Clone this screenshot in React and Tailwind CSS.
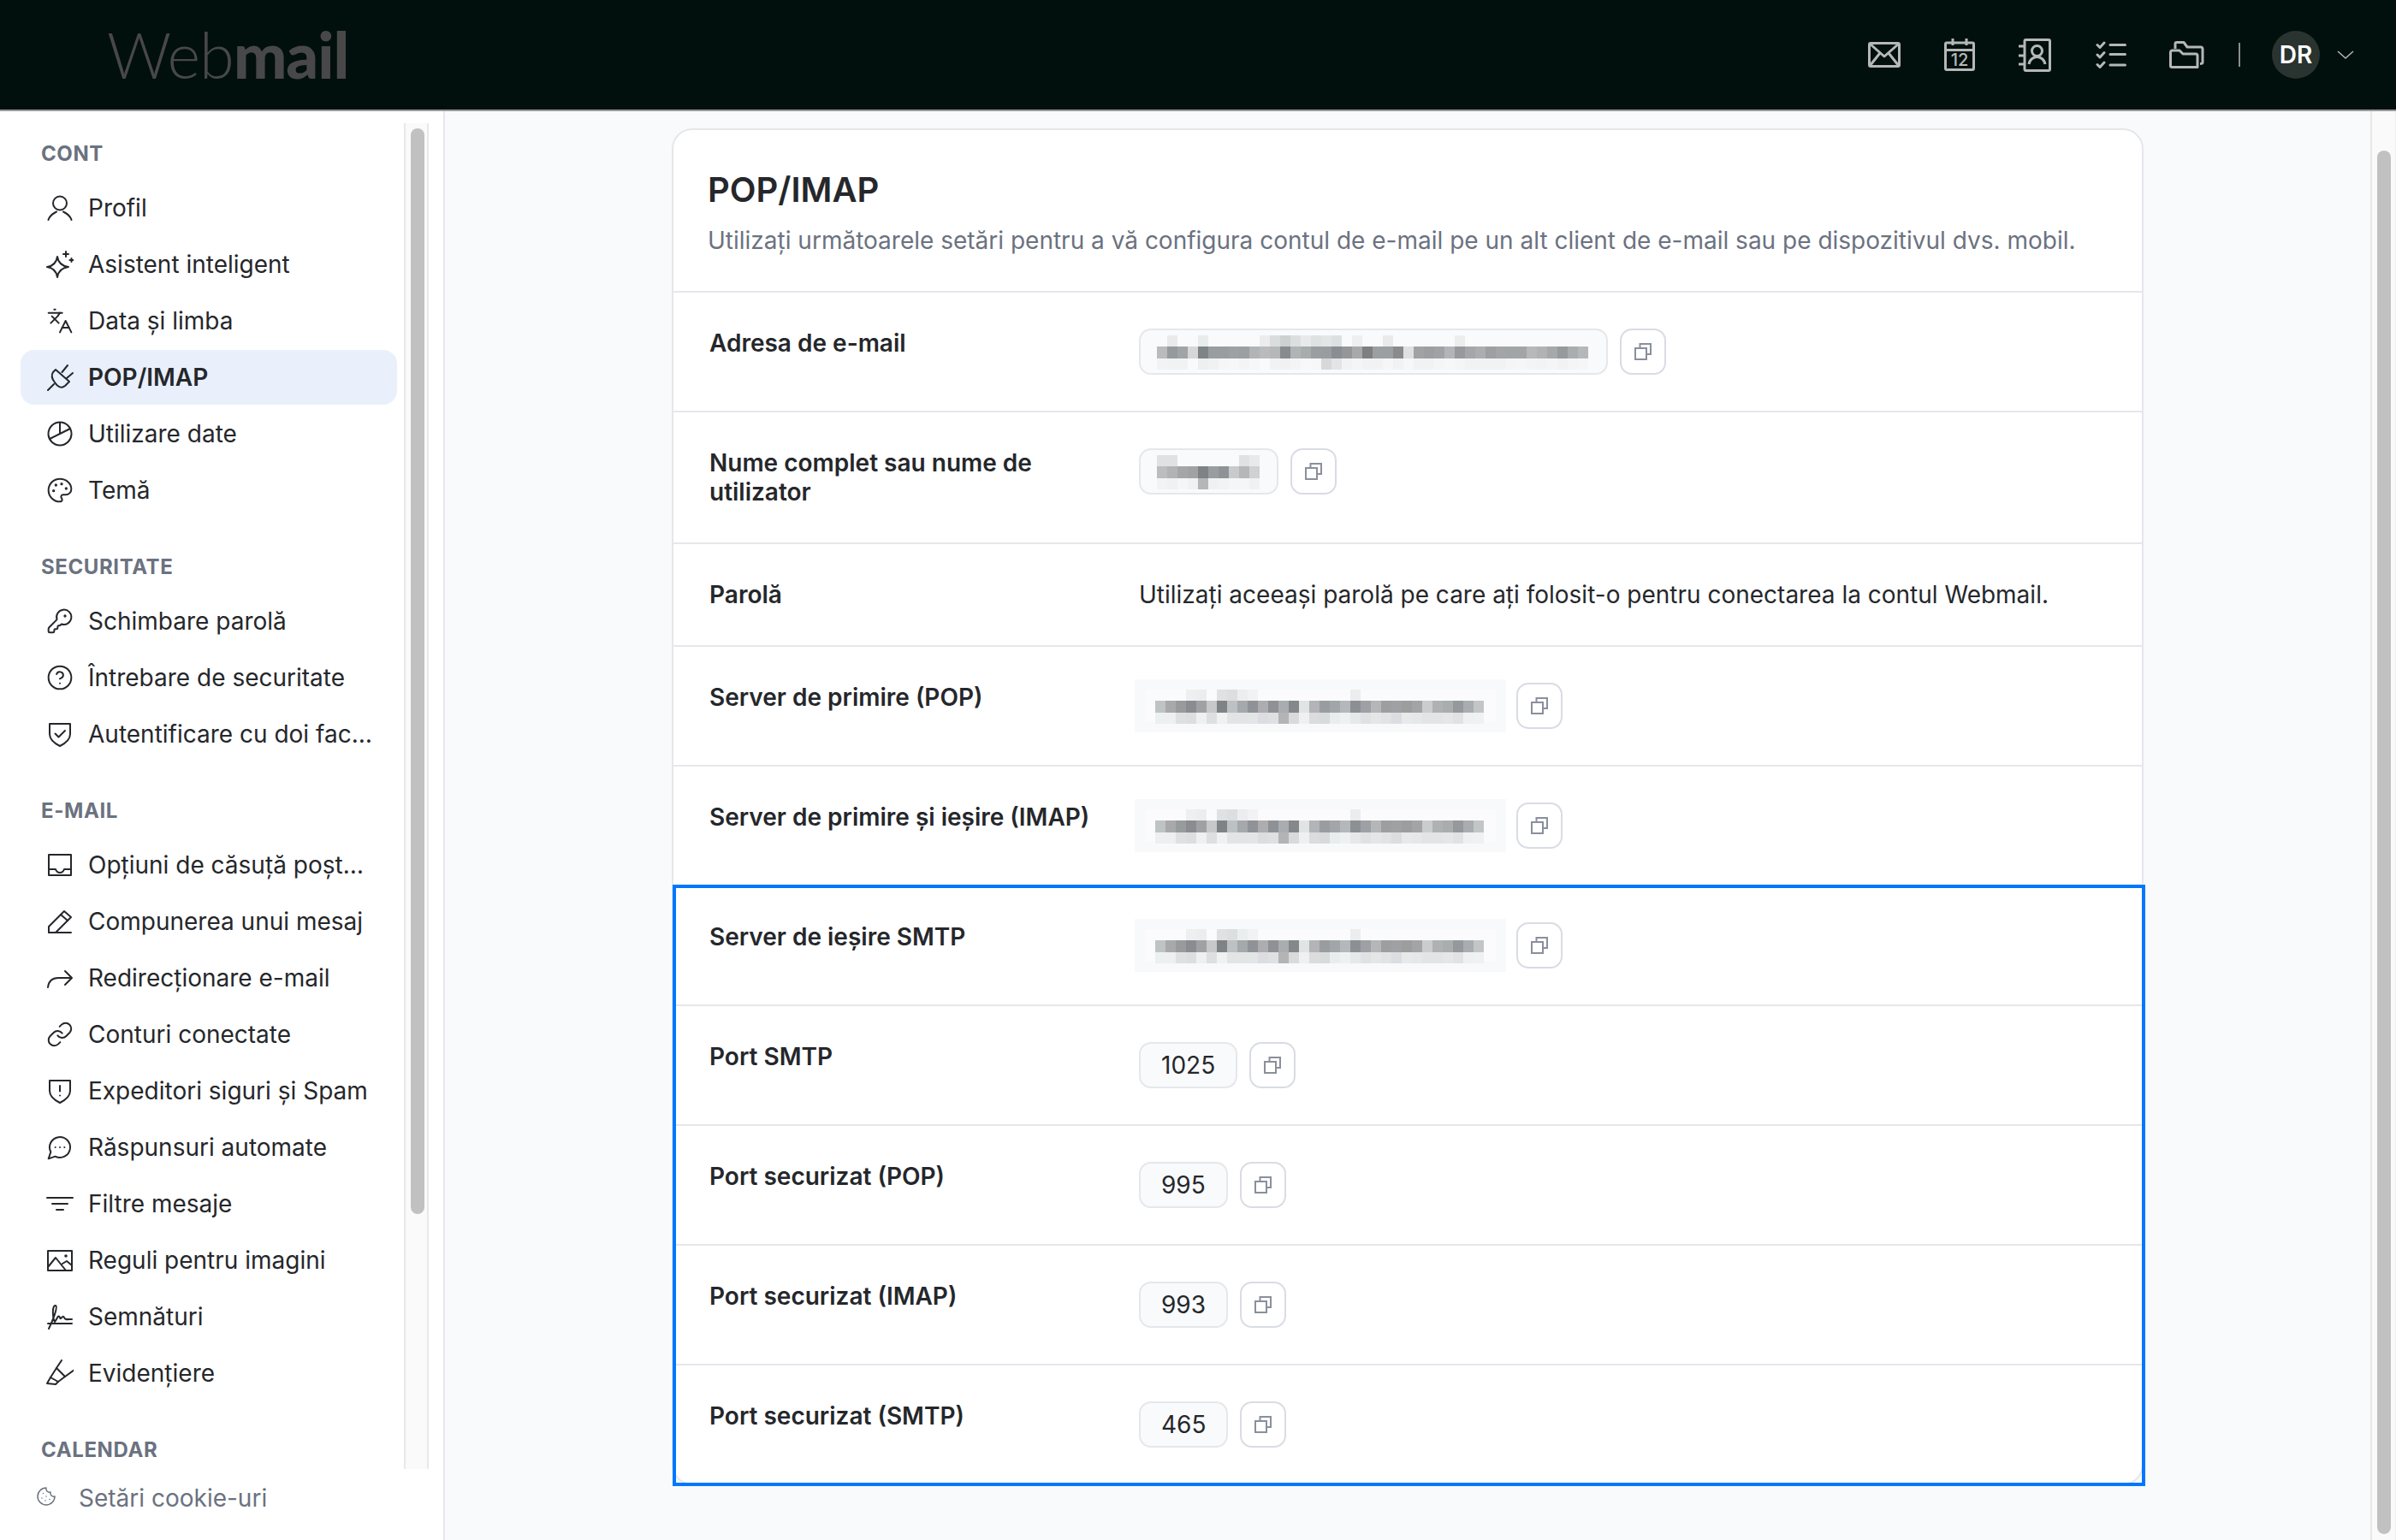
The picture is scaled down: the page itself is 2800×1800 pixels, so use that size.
import React from "react";

const Ic = ({ children, size = 32, sw = 1.5, vb = "0 0 24 24", className = "" }) => (
  <svg width={size} height={size} viewBox={vb} fill="none" stroke="currentColor" strokeWidth={sw} strokeLinecap="round" strokeLinejoin="round" className={"shrink-0 " + className}>
    {children}
  </svg>
);
const I32 = ({ children }) => <Ic vb="0 0 32 32" sw={2}>{children}</Ic>;

const icons = {
  user: <I32><circle cx="16" cy="10.5" r="8" /><path d="M2.5 30C4 25 8 22.5 12 20.5M29.5 30C28 25 24 22.5 20 20.5" /></I32>,
  sparkle: <I32><path d="M13 7C14 14 18 18 26 19C18 20 14 24 13 31C12 24 8 20 1 19C8 18 12 14 13 7Z" /><path d="M23 1V7M20 4H26M29.5 9V13M27.5 11H31.5" /></I32>,
  lang: <Ic><path d="m5 8 6 6" /><path d="m4 14 6-6 2-3" /><path d="M2 5h12" /><path d="M7 2h1" /><path d="m22 22-5-10-5 10" /><path d="M14 18h6" /></Ic>,
  plug: <I32><path d="M11 7L27 21L22 26C18 29 14 28 10 22C6 17 6 13 8 10Z" /><path d="M9 24L2 31M25 2L18.500 10M31 11L24 17" /></I32>,
  pie: <I32><circle cx="16" cy="16" r="13.500" /><path d="M16 3V16L28 10M16 16L4 22" /></I32>,
  palette: <Ic><path d="M12 22a1 1 0 0 1 0-20 10 9 0 0 1 10 9 5 5 0 0 1-5 5h-2.250a1.750 1.750 0 0 0-1.400 2.800l.3.4a1.750 1.750 0 0 1-1.400 2.800z" /><circle cx="13.500" cy="6.500" r=".5" fill="currentColor" /><circle cx="17.500" cy="10.500" r=".5" fill="currentColor" /><circle cx="6.500" cy="12.500" r=".5" fill="currentColor" /><circle cx="8.500" cy="7.500" r=".5" fill="currentColor" /></Ic>,
  key: <Ic><path d="M2.586 17.414A2 2 0 0 0 2 18.828V21a1 1 0 0 0 1 1h3a1 1 0 0 0 1-1v-1a1 1 0 0 1 1-1h1a1 1 0 0 0 1-1v-1a1 1 0 0 1 1-1h.172a2 2 0 0 0 1.414-.586l.814-.814a6.500 6.500 0 1 0-4-4z" /><circle cx="16.500" cy="7.500" r=".5" fill="currentColor" /></Ic>,
  help: <Ic><circle cx="12" cy="12" r="10" /><path d="M9.090 9a3 3 0 0 1 5.830 1c0 2-3 3-3 3" /><path d="M12 17h.01" /></Ic>,
  shieldCheck: <I32><path d="M4 4H28V16C28 23 22 27 16 30C10 27 4 23 4 16Z" /><path d="M10.500 15.500L14.500 19.500L22 12" /></I32>,
  inbox: <I32><path d="M3 4H29V28H3Z" /><path d="M3 21H11C12 24 14 25 16 25C18 25 20 24 21 21H29" /></I32>,
  pencil: <I32><path d="M3 29V22L21 4L29 11L11 29Z" /><path d="M17 8L25 15M3 29H29" /></I32>,
  forward: <I32><path d="M2 27C3 19 8 16 14 16H30M22 8L30 16L22 24" /></I32>,
  link: <Ic><path d="M10 13a5 5 0 0 0 7.540.54l3-3a5 5 0 0 0-7.070-7.070l-1.720 1.710" /><path d="M14 11a5 5 0 0 0-7.540-.54l-3 3a5 5 0 0 0 7.070 7.070l1.710-1.710" /></Ic>,
  shieldAlert: <I32><path d="M4 4H28V16C28 23 22 27 16 30C10 27 4 23 4 16Z" /><path d="M16 10V16.500M16 21.500V21.600" /></I32>,
  message: <Ic><path d="M7.900 20A9 9 0 1 0 4 16.100L2 22Z" /><path d="M8 12h.01" /><path d="M12 12h.01" /><path d="M16 12h.01" /></Ic>,
  filter: <I32><path d="M1 9H31M7 16H25M12 23H20" /></I32>,
  image: <I32><path d="M2 5H30V28H2Z" /><path d="M2 24L11 13L23 28M19 20L24 17L30 22" /><circle cx="23" cy="11" r=".8" fill="currentColor" /></I32>,
  signature: <I32><path d="M3 30C8 20 14 4 11 3C7 2 7 16 10 22C13 18 14 13 16 17C17 21 19 13 21 17C22 20 25 19 30 19" /><path d="M2 24H30" /></I32>,
  highlight: <I32><path d="M18 1L12 10L22 20L33 12" /><path d="M12 10L5 21L14 26L22 20" /><path d="M5 21L1 28L11 29L14 26" /></I32>,
};

const sections = [
  { title: "Cont", items: [["user", "Profil"], ["sparkle", "Asistent inteligent"], ["lang", "Data și limba"], ["plug", "POP/IMAP", true], ["pie", "Utilizare date"], ["palette", "Temă"]] },
  { title: "Securitate", items: [["key", "Schimbare parolă"], ["help", "Întrebare de securitate"], ["shieldCheck", "Autentificare cu doi factori"]] },
  { title: "E-mail", items: [["inbox", "Opțiuni de căsuță poștală"], ["pencil", "Compunerea unui mesaj"], ["forward", "Redirecționare e-mail"], ["link", "Conturi conectate"], ["shieldAlert", "Expeditori siguri și Spam"], ["message", "Răspunsuri automate"], ["filter", "Filtre mesaje"], ["image", "Reguli pentru imagini"], ["signature", "Semnături"], ["highlight", "Evidențiere"]] },
  { title: "Calendar", items: [] },
];

const Mosaic = ({ top, mid, bottom, className = "" }) => (
  <svg width={mid.length * 12} height={40} shapeRendering="crispEdges" className={"shrink-0 " + className}>
    {Object.entries(top).map(([i, c]) => <rect key={"t" + i} x={i * 12} y={0} width={12} height={13} fill={c} />)}
    {mid.map((c, i) => <rect key={"m" + i} x={i * 12} y={13} width={12} height={14} fill={c} />)}
    {bottom.map((c, i) => <rect key={"b" + i} x={i * 12} y={27} width={12} height={13} fill={c} />)}
  </svg>
);

const emailM = {
  top: { 1: "#e9eaeb", 4: "#e8ecec", 10: "#ececed", 11: "#dadddd", 12: "#ced1d2", 13: "#dcdfdf", 14: "#e8e9ea", 15: "#dfe2e3", 16: "#e3e5e6", 17: "#dde0e1", 19: "#eeeff0", 22: "#e9eaeb", 29: "#eceded" },
  mid: ["#b8bcbb", "#959a9d", "#a0a4a6", "#d5d7d8", "#7e8386", "#999da0", "#999da0", "#9da1a3", "#9b9fa2", "#b0b4b7", "#b9bbbd", "#b4b8b7", "#878b8e", "#afb4b7", "#a8acad", "#9a9ea1", "#999d9f", "#8a8e92", "#93979a", "#a8a9aa", "#7c8083", "#9b9fa2", "#9b9fa2", "#878b8e", "#dfe0e1", "#a0a3a6", "#9c9fa1", "#a1a2a6", "#b2b5b8", "#98989d", "#a4a7aa", "#abaeb0", "#9e9ea3", "#a3a6a9", "#a2a5a8", "#a2a5a8", "#b6b9b8", "#b2b2b5", "#a5a9ab", "#969a9d", "#a9adaf", "#b5b8ba"],
  bottom: ["#f2f3f4", "#f1f2f3", "#f1f2f3", "#f9fafb", "#eeeff1", "#f0f1f3", "#f5f6f7", "#f6f7f8", "#f3f4f5", "#f6f7f8", "#f9fafb", "#f1f2f4", "#f0f1f3", "#f3f4f6", "#f7f8f9", "#f6f8f8", "#d6d8da", "#e2e4e6", "#f1f2f3", "#f4f5f6", "#f1f2f4", "#f1f2f4", "#f5f6f7", "#f1f2f4", "#f6f7f8", "#f0f2f3", "#f0f2f3", "#f4f5f6", "#f6f7f8", "#f4f5f6", "#f1f2f4", "#f1f2f4", "#f0f2f3", "#f0f2f3", "#f4f5f6", "#f5f6f7", "#f3f4f5", "#f2f3f4", "#f4f5f6", "#f1f2f4", "#f4f5f6", "#f5f6f7"],
};
const nameM = {
  top: { 0: "#dfe1e3", 1: "#dfe1e3", 8: "#dfe1e3", 9: "#e7e9ea" },
  mid: ["#bbbdbf", "#b1b3b5", "#a4a6a8", "#a0a2a4", "#7f8285", "#9a9da0", "#8f9397", "#c8cbcc", "#b5b7b9", "#cfd1d2"],
  bottom: ["#f2f3f4", "#f0f1f3", "#f5f6f7", "#f0f1f3", "#b4b6b8", "#f0f1f3", "#f2f3f4", "#f5f6f7", "#f5f6f7", "#f0f1f3"],
};
const serverM = {
  top: { 3: "#eeeff0", 4: "#ecedee", 6: "#e0e1e3", 7: "#dcdfdf", 8: "#ecedef", 9: "#f2f2f4", 19: "#ecedef" },
  mid: ["#bfc3c6", "#a8a9ab", "#979b9e", "#898d91", "#a0a1a5", "#c6c8c9", "#7f8386", "#bcc1c4", "#a5a9ac", "#8f9397", "#adadaf", "#8e9195", "#a9adb0", "#84888b", "#e1e4e4", "#b2b4b7", "#9a9da0", "#a3a6a9", "#b4b8bb", "#8c9095", "#9da1a5", "#b5b6b8", "#9d9ea2", "#a0a1a4", "#9c9d9f", "#a3a4a7", "#cbcccd", "#afb2b5", "#a9adad", "#95989c", "#aaadb0", "#c2c6c7"],
  bottom: ["#ecf0f1", "#ecf0f1", "#dfe0e2", "#dddee0", "#eff0f2", "#dde0e1", "#f0f1f3", "#e3e4e6", "#e3e4e6", "#e4e5e7", "#dcdde0", "#dee0e1", "#b3b4b6", "#d9dadc", "#eff0f1", "#dadcdd", "#d8dbdc", "#e9edee", "#eef1f2", "#e6e8ea", "#e0e1e3", "#e5e6e8", "#e1e3e5", "#dcdde0", "#e8e9eb", "#e5e8e9", "#e3e4e6", "#e2e4e6", "#e5e6e8", "#e1e2e4", "#eff0f2", "#eff1f2"],
};

const CopyBtn = () => (
  <button className="w-[54px] h-[54px] shrink-0 flex items-center justify-center rounded-[14px] border-2 border-[#d9dce3] bg-white text-[#8a8f9c]">
    <svg width="20" height="20" viewBox="0 0 20 20" fill="none" stroke="currentColor" strokeWidth="2">
      <path d="M6.500 6V1H19V13H14" />
      <rect x="1" y="6" width="13" height="13" />
    </svg>
  </button>
);

const Box = ({ children, className = "" }) => (
  <div className={"h-[54px] rounded-[14px] border-2 border-[#e5e7eb] bg-[#f9fafb] flex items-center leading-[50px] " + className}>{children}</div>
);

const Copyable = ({ children, gap = "gap-[14px]" }) => <div className={"flex items-start " + gap}>{children}<CopyBtn /></div>;

const MaskBox = ({ m, w }) => (
  <Copyable>
    <Box className={"items-start pl-[19px] pt-[6px] " + w}><Mosaic {...m} /></Box>
  </Copyable>
);

const ServerValue = () => (
  <div className="flex items-start gap-[12px]">
    <div className="-ml-[5px] -my-[4px] w-[434px] h-[62px] shrink-0 bg-[#f8f9fb] p-[12px] pb-[12px]">
      <div className="h-[38px] bg-[#fbfbfd] pl-[12px]"><Mosaic {...serverM} /></div>
    </div>
    <CopyBtn />
  </div>
);

const Port = ({ v }) => <Copyable><Box className="px-[24px]">{v}</Box></Copyable>;

const Row = ({ label, children, last }) => (
  <div className={"flex items-start px-[42px] py-[42px] " + (last ? "" : "border-b-2 border-[#e5e7eb]")}>
    <div className="w-[502px] shrink-0 pr-[32px] font-semibold leading-[34px]">{label}</div>
    <div className="flex-1 leading-[34px]">{children}</div>
  </div>
);

export default function App() {
  return (
    <div className="w-[2800px] h-[1800px] flex flex-col overflow-hidden bg-[#f9fafb] text-[28px] text-[#25272b] font-['Inter',sans-serif]">
      <header className="h-[130px] shrink-0 flex items-center border-b-2 border-[#999999] bg-[#010f0d]">
        <div className="pl-[125px] flex-1 text-[74px] leading-[128px] text-[#484848] font-['Lato',sans-serif] font-light tracking-[-1px]">
          Web<span className="font-black">mail</span>
        </div>
        <div className="flex items-center text-[#b4b8b6]">
          <div className="w-[88px] flex justify-center">
            <svg width="38" height="30" viewBox="0 0 38 30" fill="none" stroke="currentColor" strokeWidth="3" strokeLinejoin="round">
              <rect x="1.500" y="1.500" width="35" height="27" rx="1.500" />
              <path d="M2 2L19 17L36 2M2 28L14 13M36 28L24 13" />
            </svg>
          </div>
          <div className="w-[88px] flex justify-center">
            <svg width="36" height="38" viewBox="0 0 36 38" fill="none" stroke="currentColor" strokeWidth="3" strokeLinejoin="round">
              <rect x="1.500" y="5" width="33" height="31.500" rx="1.500" />
              <path d="M2 13.500H34M10 0V8M26 0V8" />
              <text x="18" y="32" textAnchor="middle" fontSize="20" fontFamily="Inter" fontWeight="500" fill="currentColor" stroke="none">12</text>
            </svg>
          </div>
          <div className="w-[88px] flex justify-center">
            <svg width="38" height="39" viewBox="0 0 38 39" fill="none" stroke="currentColor" strokeWidth="3" strokeLinejoin="round">
              <rect x="7" y="1.500" width="29.500" height="36" rx="1.500" />
              <path d="M0 9H7M0 20H7M0 30H7" />
              <circle cx="21.500" cy="14.500" r="6" />
              <path d="M12 30C13 24 18 21.500 21.500 21.500C25 21.500 30 24 31 30" />
            </svg>
          </div>
          <div className="w-[89px] flex justify-center">
            <svg width="36" height="32" viewBox="0 0 36 32" fill="none" stroke="currentColor" strokeWidth="3" strokeLinecap="round" strokeLinejoin="round">
              <path d="M2 4.500L5 7.500L10 2M2 16L5 19L10 13.500M2 27.500L5 30.500L10 25" />
              <path d="M17 4.500H34.500M17 15.500H34.500M17 28H34.500" />
            </svg>
          </div>
          <div className="w-[88px] flex justify-center">
            <svg width="41" height="32" viewBox="0 0 41 32" fill="none" stroke="currentColor" strokeWidth="3" strokeLinejoin="round">
              <path d="M7 9V3C7 2 8 1.500 9 1.500H17L21 7H37C38 7 39 8 39 9V25C39 26 38 26.500 36 26.500" />
              <path d="M1.500 13C1.500 12 2.500 11 3.500 11H12L16 15H31C32.500 15 33 16 33 17V30.500H3C2 30.500 1.500 30 1.500 29Z" />
            </svg>
          </div>
          <div className="w-[2px] h-[28px] bg-[#8a8e8c] ml-[17px] mr-[37px]" />
          <div className="w-[56px] h-[56px] rounded-full bg-[#29332f] flex items-center justify-center text-white text-[28px] font-semibold">DR</div>
          <svg className="ml-[20px] mr-[49px]" width="20" height="10" viewBox="0 0 20 10" fill="none" stroke="currentColor" strokeWidth="1.500">
            <path d="M1 1L10 9L19 1" />
          </svg>
        </div>
      </header>

      <div className="flex-1 flex min-h-0">
        <aside className="w-[520px] shrink-0 bg-white border-r-2 border-[#e5e7eb] flex flex-col">
          <div className="mt-[14px] h-[1573px] shrink-0 flex overflow-hidden">
            <nav className="w-[472px] shrink-0 pl-[24px] pt-[18px] overflow-hidden">
              {sections.map((s) => (
                <div key={s.title} className="mb-[40px]">
                  <div className="pl-[24px] h-[36px] mb-[13px] flex items-center text-[24px] font-bold uppercase text-[#6b7280] tracking-[0.6px]">{s.title}</div>
                  <div className="flex flex-col gap-[2px]">
                    {s.items.map(([ic, label, active]) => (
                      <div key={label} className={"h-[64px] w-[440px] rounded-[16px] flex items-center pl-[30px] pr-[26px] gap-[17px] " + (active ? "bg-[#e9f0fb] font-semibold" : "")}>
                        {icons[ic]}
                        <span className="truncate">{label}</span>
                      </div>
                    ))}
                  </div>
                </div>
              ))}
            </nav>
            <div className="w-[29px] shrink-0 bg-[#fafafa] border-x-2 border-[#e8e8e8]">
              <div className="ml-[6px] mt-[6px] w-[16px] h-[1269px] rounded-full bg-[#c1c1c1]" />
            </div>
          </div>
          <div className="flex items-start pl-[42px] text-[#6b7280]">
            <div className="mt-[20px] w-[24px] h-[24px]">
              <Ic size={24} sw={1.5}>
                <path d="M12 2a10 10 0 1 0 10 10 4 4 0 0 1-5-5 4 4 0 0 1-5-5" /><path d="M8.500 8.500v.01" /><path d="M16 15.500v.01" /><path d="M12 12v.01" /><path d="M11 17v.01" /><path d="M7 14v.01" />
              </Ic>
            </div>
            <span className="ml-[26px] mt-[14px] leading-[40px]">Setări cookie-uri</span>
          </div>
        </aside>

        <main className="flex-1 flex min-w-0">
          <div className="flex-1 min-w-0 pt-[20px]">
            <div className="w-[1720px] mx-auto rounded-[24px] border-2 border-[#e5e7eb] bg-white">
              <div className="h-[190px] px-[40px] border-b-2 border-[#e5e7eb] pt-[44px]">
                <h1 className="text-[40px] leading-[52px] font-semibold">POP/IMAP</h1>
                <p className="mt-[14px] leading-[38px] text-[#6b7280]">Utilizați următoarele setări pentru a vă configura contul de e-mail pe un alt client de e-mail sau pe dispozitivul dvs. mobil.</p>
              </div>
              <Row label="Adresa de e-mail"><MaskBox m={emailM} w="w-[548px]" /></Row>
              <Row label="Nume complet sau nume de utilizator"><MaskBox m={nameM} w="w-[163px]" /></Row>
              <Row label="Parolă">Utilizați aceeași parolă pe care ați folosit-o pentru conectarea la contul Webmail.</Row>
              <Row label="Server de primire (POP)"><ServerValue /></Row>
              <Row label="Server de primire și ieșire (IMAP)"><ServerValue /></Row>
              <div className="relative">
                <div className="absolute -top-[2px] -left-[1px] -right-[4px] -bottom-[3px] border-4 border-[#0077ff] pointer-events-none z-10" />
                <Row label="Server de ieșire SMTP"><ServerValue /></Row>
                <Row label="Port SMTP"><Port v="1025" /></Row>
                <Row label="Port securizat (POP)"><Port v="995" /></Row>
                <Row label="Port securizat (IMAP)"><Port v="993" /></Row>
                <Row label="Port securizat (SMTP)" last><Port v="465" /></Row>
              </div>
            </div>
          </div>
          <div className="w-[30px] shrink-0 bg-[#fafafa] border-l-2 border-[#e8e8e8] border-r border-r-[#eeeeee]">
            <div className="ml-[6px] mt-[46px] w-[16px] h-[1617px] rounded-full bg-[#c1c1c1]" />
          </div>
        </main>
      </div>
    </div>
  );
}
